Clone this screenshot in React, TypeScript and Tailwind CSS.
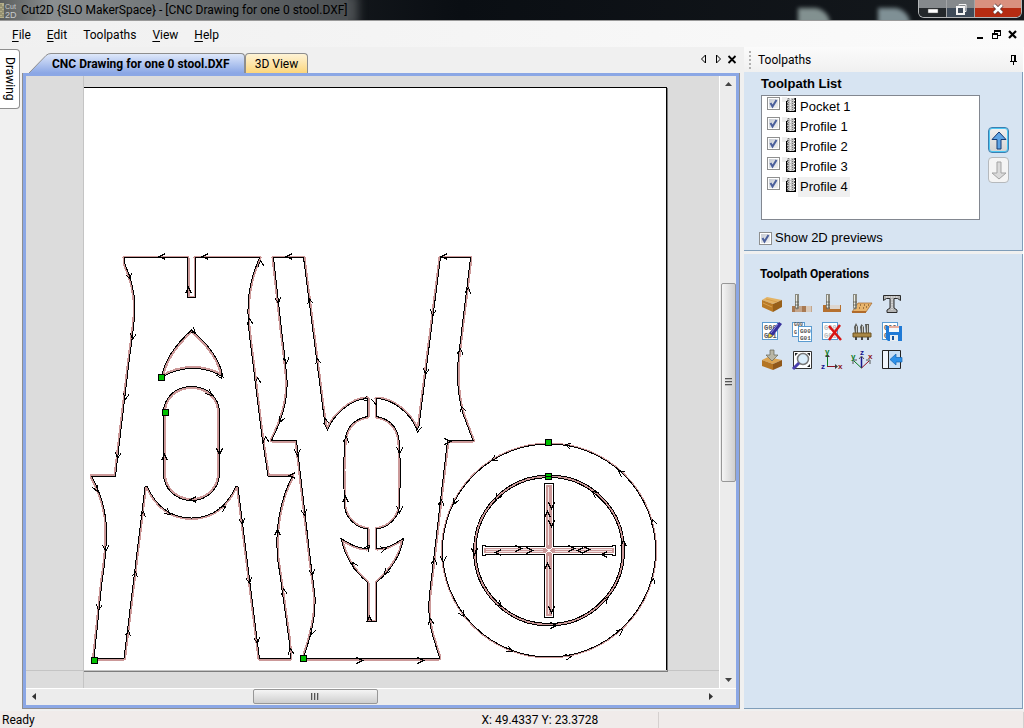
import React, { useState } from 'react'

type ArrowPoint = [x: number, y: number, angle: number]

// Toolpath outlines, in sheet coordinates
const LEG_A =
  'M94 658.5H124L145 487L147 486C156 506 171 518 191.5 518S227 506 236 486L238 487L259.500 658.500H290.500L289 640L280 575C277 560 276 540 278 524S284 492 292.500 476H268L262 437L250 340C247 318 247 300 251 283C253 274 256 266 259.500 257.500H195.500V297.500H187.500V257.500H124.500V263C132 280 135 295 135 308S131 345 129 362L115.500 476H91.500C101 494 106.500 512 106.500 530S104 570 102 582Z'
const LEG_B =
  'M273.500 257.500H303.500L325 425L327.500 430C333 416 350 399 367.500 398.500V416.500C354 419 345 428 344.500 445L343.500 470L344.500 507C346 518 356 528 367.500 529V548.500C358 549 350 544 341 538.500C345 556 352 569 367.500 582.500V621.500H376.500V582.500C391 570 401 555 403.500 538.500C394 544 387 549 376.500 548.500V529C388 528 398 518 399.500 507L400.500 470L399.500 445C399 428 390 419 376.500 416.500V398.500C392 399 410 412 417 430L419 426L440.500 257.500H470.500L466 295L459 352C456 375 457 393 463 414L473 440.500H447.500L434 556L430 590C427 612 430 628 434 640L439 656V658.500H303.500L305 653C312 633 316 615 315 597C314 585 311 566 310 556L296.500 440.500H271.500C283 418 288 400 287 380C286 365 284 350 282 334Z'
const ARROW_HOLE =
  'M161.500 377.500C164 362 175 345 191.500 330C207 343 220 359 223 377C204 365 180 366 161.500 377.500Z'
const OVAL_HOLE =
  'M163.500 413C163.500 397 176 386.500 191.500 386.500S219.500 397 219.500 413V473C219.500 489 207 500.500 191.500 500.500S163.500 489 163.500 473Z'

const ARROWS: ArrowPoint[] = [
  [159, 256, 180], [202, 256, 180], [130, 279, 70], [188, 287, -90], [260, 260, -95],
  [132, 339, 98], [125, 399, 98], [117, 458, 98], [249, 318, -95], [257, 377, -95],
  [265, 436, -95], [195, 333, 45], [221, 378, 60], [211, 395, 45], [219, 454, 90],
  [164, 454, -90], [190, 499, 180], [97, 491, 65], [105, 551, 93], [98, 610, 98],
  [143, 510, -82], [135, 570, -82], [128, 629, -82], [170, 514, 35], [225, 506, -35],
  [242, 524, 82], [249, 583, 82], [257, 643, 82], [290, 648, -95], [283, 588, -97],
  [277, 529, -90], [289, 475, 180], [286, 256, 180], [278, 303, 82], [286, 363, 85],
  [279, 422, 115], [297, 455, 88], [309, 297, -98], [317, 357, -98], [325, 417, -98],
  [361, 399, 170], [375, 404, 80], [441, 256, 180], [432, 315, 98], [425, 374, 98],
  [417, 432, 100], [468, 287, -83], [460, 348, -85], [461, 405, -105], [450, 441, 0],
  [346, 436, -83], [399, 453, 92], [304, 515, 82], [312, 575, 82], [311, 634, 110],
  [345, 496, -90], [399, 512, 92], [369, 545, -50], [386, 548, -10], [352, 562, -125],
  [384, 574, 125], [369, 616, -90], [362, 660, 0], [423, 660, 0], [430, 618, -95],
  [434, 558, -85], [441, 499, -85], [564, 444, 195], [491, 460, 150], [453, 504, 115],
  [443, 562, 88], [463, 616, 60], [512, 651, 25], [571, 656, -8], [622, 629, -40],
  [653, 577, -80], [652, 518, -105], [618, 470, -140], [495, 499, 130], [474, 554, 90],
  [501, 606, 45], [556, 625, 0], [607, 597, -50], [623, 540, -90], [592, 491, -140],
  [521, 548, 0], [532, 550, 0], [495, 552, 180], [574, 548, 0], [577, 550, 180],
  [589, 549, 0], [601, 554, 180], [547, 511, -90], [551, 526, 90], [551, 508, 90],
  [547, 563, -90], [551, 612, 90],
]

const START_POINTS = [
  [161, 377], [165, 412], [94, 660], [303, 658], [548, 442], [548, 476],
]

const Sheet: React.FC = () => (
  <svg viewBox="26 76 693 612" className="block h-[612px] w-[693px] shrink-0" shapeRendering="crispEdges" fill="none">
    <path d="M83.500 76V688M26 670.500H719" stroke="#c4c4c4" />
    <rect x="84" y="87" width="583" height="583" fill="#fff" />
    <path d="M84 87.500H667M666.500 87V670" stroke="#000" />
    <path d="M667.500 88V671M84 671.500H668" stroke="#7c7c7c" />
    <clipPath id="arrow-hole"><path d={ARROW_HOLE} /></clipPath>
    <clipPath id="oval-hole"><path d={OVAL_HOLE} /></clipPath>

    {/* tool offset outside the legs */}
    {[LEG_A, LEG_B].map((d) => (
      <g key={d}>
        <path d={d} stroke="#cc9999" strokeWidth="4" strokeLinejoin="round" />
        <path d={d} fill="#fff" stroke="#000" />
      </g>
    ))}

    {/* tool offset inside the holes */}
    <path d={ARROW_HOLE} stroke="#cc9999" strokeWidth="5" clipPath="url(#arrow-hole)" />
    <path d={ARROW_HOLE} stroke="#000" />
    <path d={OVAL_HOLE} stroke="#cc9999" strokeWidth="5" clipPath="url(#oval-hole)" />
    <path d={OVAL_HOLE} stroke="#000" />

    {/* seat */}
    <circle cx="549" cy="550.500" r="107.500" stroke="#cc9999" />
    <circle cx="549" cy="550.500" r="106.500" stroke="#000" />
    <circle cx="549" cy="550.500" r="74.500" stroke="#cc9999" strokeWidth="2" />
    <circle cx="549" cy="550.500" r="75.500" stroke="#000" />
    <circle cx="549" cy="550.500" r="73" stroke="#000" />
    <path d="M544.500 546.500V483.500H553.500V546.500H612.500V545.500H615.500V555.500H612.500V554.500H553.500V617.500H544.500V554.500H485.500V555.500H482.500V545.500H485.500V546.500Z" fill="#fff" stroke="#000" />
    <path d="M546 485H552V616H546ZM484 548H614V553H484Z" fill="#cc9999" />
    <path d="M548.500 487V545M548.500 556V614M486 549.500H543M555 549.500H612M486 551.500H543M555 551.500H612" stroke="#f2e4e4" />
    <path d="M546 548L552 553M552 548L546 553" stroke="#fff" />

    <g stroke="#000">
      {ARROWS.map(([x, y, angle]) => (
        <path key={`${x}-${y}`} d="M-6 -3L0 0L-6 3" transform={`translate(${x + 0.5} ${y + 0.5}) rotate(${angle})`} />
      ))}
    </g>
    {START_POINTS.map(([x, y]) => (
      <rect key={`${x}-${y}`} x={x - 2.5} y={y - 2.5} width="6" height="6" fill="#00c000" stroke="#000" />
    ))}
    <path d="M546 476.500H551" stroke="#000" />
  </svg>
)

interface CheckProps {
  id: string
  checked: boolean
  onChange: () => void
}

const Check: React.FC<CheckProps> = ({ id, checked, onChange }) => (
  <span className="relative block h-[13px] w-[13px] shrink-0">
    <input
      id={id}
      type="checkbox"
      checked={checked}
      onChange={onChange}
      className="block h-[13px] w-[13px] appearance-none border border-[#8e8f8f] bg-linear-to-br from-[#c3c8d0] to-[#f6f6f6] ring-1 ring-white ring-inset"
    />
    {checked && (
      <svg viewBox="0 0 13 13" className="pointer-events-none absolute inset-0" fill="none">
        <path d="M3.500 6L5.500 9.500L9.500 3" stroke="#4b5f9b" strokeWidth="2" />
      </svg>
    )}
  </span>
)

const EndMill: React.FC = () => (
  <svg viewBox="0 0 14 15" className="h-[15px] w-3.5 shrink-0" shapeRendering="crispEdges">
    <path d="M0 0H5V5H0Z" fill="#efefef" />
    <path d="M5 1H12V14H5Z" fill="#c4c4c4" />
    <path d="M4 4H5V14H4ZM13 1H14V14H13ZM4 14H14V15H4Z" fill="#000" />
    <path d="M6.500 1V14M10.500 2V14" stroke="#777" strokeDasharray="1 1" />
    <path d="M5.500 3V14M12.500 1V14" stroke="#555" strokeDasharray="2 1" />
    <path d="M8.500 1V14" stroke="#efefef" strokeDasharray="2 1" />
  </svg>
)

const GCode = ({ faded = false }: { faded?: boolean }) => (
  <g>
    <rect x="0.500" y="0.500" width="15" height="17" fill="#fff" stroke="#5a9bd0" />
    <g fontFamily="Liberation Mono" fontSize="7" fontWeight="bold" fill={faded ? '#bbb' : '#555'}>
      <text x="2" y="8">G00</text>
      <text x="2" y="16">G01</text>
    </g>
  </g>
)

const Bit = ({ x }: { x: number }) => (
  <g>
    <path d={`M${x} 0h4v13l-2 3l-2-3z`} fill="#8a8a80" />
    <path d={`M${x + 1.5} 1v13`} stroke="#ecece4" />
    <path d={`M${x} 8h4M${x} 11h4M${x} 14h4`} stroke="#55554c" strokeWidth="0.700" />
  </g>
)

const OPERATIONS: { name: string; icon: React.ReactNode }[] = [
  {
    name: 'Material Setup',
    icon: (
      <>
        <path d="M0 6L5 3L20 6L11 10Z" fill="#e3b365" />
        <path d="M0 6L11 10V18L0 13Z" fill="#b97a26" />
        <path d="M11 10L20 6V13L11 18Z" fill="#98601a" />
        <path d="M1 9L10 13M4 5L15 8" stroke="#d8a04c" />
      </>
    ),
  },
  {
    name: 'Profile Toolpath',
    icon: (
      <>
        <path d="M0 12H20V18H0Z" fill="#c4a58b" />
        <path d="M0 12H3V18H0ZM10 12H14V18H10Z" fill="#a87952" />
        <path d="M14 12H19V18H14Z" fill="#d9cabb" />
        <Bit x={3} />
      </>
    ),
  },
  {
    name: 'Pocket Toolpath',
    icon: (
      <>
        <path d="M1 11H19V18H1Z" fill="#b5702f" />
        <path d="M8 11H18V15H8Z" fill="#ddd6d0" />
        <Bit x={4} />
      </>
    ),
  },
  {
    name: 'Drilling Toolpath',
    icon: (
      <>
        <path d="M6 9H20L14 18H0Z" fill="#e8b46c" stroke="#a4642a" strokeWidth="0.700" />
        <path d="M8 11h1M12 11h1M16 11h1M7 14h1M11 14h1M14 13h1" stroke="#5b3714" />
        <path d="M0 17H14V19H0Z" fill="#b06b2b" />
        <Bit x={1} />
      </>
    ),
  },
  {
    name: 'Quick Engrave',
    icon: (
      <>
        <path d="M1.500 1.500H18.500V6.500L15.500 4.500H12V14L15 16V18.500H5V16L8 14V4.500H4.500L1.500 6.500Z" fill="#b4b4b4" stroke="#2c2c2c" />
        <path d="M10 5V16M4 3H16" stroke="#eee" strokeDasharray="1.500 1" />
      </>
    ),
  },
  {
    name: 'Edit Toolpath',
    icon: (
      <>
        <GCode />
        <path d="M17 0L20 2L11 14L7 11Z" fill="#36309c" />
        <path d="M16 2L9 11" stroke="#8e8ae0" />
        <path d="M7 11L11 14L6 16Z" fill="#f0da42" stroke="#333" strokeWidth="0.500" />
      </>
    ),
  },
  {
    name: 'Duplicate Toolpath',
    icon: (
      <>
        <rect x="0.500" y="0.500" width="12" height="14" fill="#fff" stroke="#5a9bd0" />
        <rect x="6.500" y="4.500" width="13" height="15" fill="#fff" stroke="#5a9bd0" />
        <g fontFamily="Liberation Mono" fontWeight="bold" fill="#555" fontSize="5">
          <text x="2" y="4">G00</text>
          <text x="2" y="12">G</text>
        </g>
        <g fontFamily="Liberation Mono" fontWeight="bold" fill="#555" fontSize="6">
          <text x="8" y="11">G00</text>
          <text x="8" y="18">G01</text>
        </g>
      </>
    ),
  },
  {
    name: 'Delete Toolpath',
    icon: (
      <>
        <GCode faded />
        <path d="M7 4L19 18M18 3L7 18" stroke="#d81414" strokeWidth="2.500" />
      </>
    ),
  },
  {
    name: 'Tool Database',
    icon: (
      <>
        <path d="M2 5L4 1L6 5V12H3ZM8 5L9.500 2L12 5V12H9ZM13 2H17V12H14Z" fill="#5c5c58" />
        <path d="M4.500 4V12M10.500 4V12M15.500 3V12" stroke="#c8c8c0" />
        <path d="M1 11H19V15H1Z" fill="#a98745" stroke="#6e5524" />
        <path d="M4 15V18M10 15V18M16 15V18" stroke="#444" strokeWidth="2" />
      </>
    ),
  },
  {
    name: 'Save Toolpath',
    icon: (
      <>
        <GCode />
        <path d="M4 4H20V19H6L4 17Z" fill="#1f7ad6" />
        <path d="M7 4H17V10H7Z" fill="#f4f8fb" />
        <path d="M7 5H17" stroke="#e06640" />
        <path d="M8 13H16V19H8Z" fill="#e9eef2" />
        <path d="M10 14H12V18H10Z" fill="#14539c" />
      </>
    ),
  },
  {
    name: 'Preview Toolpaths',
    icon: (
      <>
        <path d="M0 10L6 7L20 10L11 14Z" fill="#dca552" />
        <path d="M0 10L11 14V20L0 16Z" fill="#b47523" />
        <path d="M11 14L20 10V16L11 20Z" fill="#90581a" />
        <path d="M8 0H12V5H16L10 11L4 5H8Z" fill="#b9b6a5" stroke="#666655" strokeWidth="0.700" />
      </>
    ),
  },
  {
    name: 'Zoom to Fit',
    icon: (
      <>
        <path d="M1.500 1.500H19.500V18.500H1.500Z" fill="#fff" stroke="#333" />
        <path d="M3 3h3l-3 3zM18 3h-3l3 3zM18 17h-3l3-3z" fill="#222" />
        <circle cx="11" cy="9" r="5.500" fill="#dceefb" stroke="#777" strokeWidth="1.500" />
        <path d="M7 13L1 19" stroke="#4a3fae" strokeWidth="3" />
      </>
    ),
  },
  {
    name: 'View down Z axis',
    icon: (
      <>
        <path d="M5.500 6V16" stroke="#0a7a1e" />
        <path d="M5 16.500H15" stroke="#8d1020" />
        <path d="M3 7L5.500 4L8 7ZM13 14L16 16.500L13 19Z" fill="#3c3c3c" />
        <g fontFamily="Liberation Sans" fontSize="8" fontWeight="bold">
          <text x="3" y="4" fill="#0a7a1e">y</text>
          <text x="-1" y="19" fill="#16168c">z</text>
          <text x="16" y="19" fill="#8d1020">x</text>
        </g>
      </>
    ),
  },
  {
    name: 'Isometric View',
    icon: (
      <>
        <path d="M9.500 7V18" stroke="#16168c" strokeWidth="1.500" />
        <path d="M9.500 18L2 11" stroke="#0a7a1e" />
        <path d="M9.500 18L17 11" stroke="#8d1020" />
        <path d="M7 9L9.500 6L12 9M1 14V10H5M18 14V10H14" stroke="#555" fill="none" />
        <g fontFamily="Liberation Sans" fontSize="8" fontWeight="bold">
          <text x="8" y="5" fill="#16168c">z</text>
          <text x="-1" y="9" fill="#0a7a1e">y</text>
          <text x="16" y="9" fill="#8d1020">x</text>
        </g>
      </>
    ),
  },
  {
    name: 'Switch to Drawing Tab',
    icon: (
      <>
        <path d="M0.500 0.500H18.500V18.500H0.500Z" fill="#fff" stroke="#222" />
        <path d="M1 1H6V18H1Z" fill="#f1f6fc" />
        <path d="M7 1H18V18H7Z" fill="#c8dff5" />
        <path d="M6.500 1V18" stroke="#222" />
        <path d="M8 9.500L14 4V7.500H20V12H14V15Z" fill="#2f92ea" stroke="#1364b4" strokeWidth="0.700" />
      </>
    ),
  },
]

const Grip = () => (
  <svg viewBox="0 0 9 7" className="h-[7px] w-[9px]" shapeRendering="crispEdges">
    <path d="M0.500 0V7M3.500 0V7M6.500 0V7" stroke="#555" />
    <path d="M1.500 0V7M4.500 0V7M7.500 0V7" stroke="#bbb" />
  </svg>
)

const MENUS = ['File', 'Edit', 'Toolpaths', 'View', 'Help']

const App: React.FC = () => {
  const [toolpaths, setToolpaths] = useState([
    { name: 'Pocket 1', visible: true },
    { name: 'Profile 1', visible: true },
    { name: 'Profile 2', visible: true },
    { name: 'Profile 3', visible: true },
    { name: 'Profile 4', visible: true },
  ])
  const [previews, setPreviews] = useState(true)

  const toggle = (index: number) =>
    setToolpaths(toolpaths.map((t, i) => (i === index ? { ...t, visible: !t.visible } : t)))

  return (
    <div className="flex h-screen flex-col overflow-hidden bg-[#f0f0f0] font-[Roboto,sans-serif] text-xs text-black">
      {/* Title bar */}
      <header className="flex h-[21px] shrink-0 items-start justify-between overflow-hidden border-b border-[#9a9a9a] bg-linear-to-r from-[#2e3133] via-[#0a0e13] via-45% to-[#15191d]">
        <div className="flex h-5 items-center bg-linear-to-r from-[#5b5e5d] via-[#8a8e90] via-15% to-[#4b4f52] shadow-[4px_0_10px_6px_#4b4f52]">
          <svg viewBox="0 0 17 20" className="h-5 w-[17px]">
            <path d="M0 3H4V18H0Z" fill="#b6b08a" />
            <path d="M1 4V17M3 6V18" stroke="#77745b" strokeDasharray="3 1" />
            <g fill="#c8cacb" fontFamily="Liberation Sans">
              <text x="5" y="9" fontSize="7">Cut</text>
              <text x="5" y="18" fontSize="9">2D</text>
            </g>
          </svg>
          <h1 className="pl-1 leading-5 whitespace-nowrap">Cut2D {'{SLO MakerSpace}'} - [CNC Drawing for one 0 stool.DXF]</h1>
        </div>
        <div className="flex items-start">
          <div className="mt-2 mr-12 h-4 w-8 rounded-tr-full bg-[#9fb0ae] opacity-80 blur-[2px]" />
          <div className="mt-2 mr-2 h-4 w-8 rounded-tr-full bg-[#9bafb4] opacity-80 blur-[2px]" />
          <div className="mr-0.5 flex h-[18px] overflow-hidden rounded-b-md border border-t-0 border-[#b4b6b8]">
            <button aria-label="Minimize" className="flex w-7 items-center justify-center border-r border-[#a2a4a6] bg-linear-to-b from-[#85898c] from-50% to-[#24282b] to-50%">
              <svg viewBox="0 0 12 12" className="h-3 w-3"><path d="M1 6H11V10H1Z" fill="#fff" stroke="#555" strokeWidth="0.500" /></svg>
            </button>
            <button aria-label="Restore" className="flex w-7 items-center justify-center border-r border-[#a2a4a6] bg-linear-to-b from-[#85898c] from-50% to-[#3f4b59] to-50%">
              <svg viewBox="0 0 12 12" className="h-3 w-3" fill="none" stroke="#f4f4f4">
                <path d="M4 2.500V1.500H11V8.500H10" />
                <path d="M2 4H9V11H2Z" strokeWidth="2" />
              </svg>
            </button>
            <button aria-label="Close" className="flex w-[46px] items-center justify-center bg-linear-to-b from-[#d9917f] from-50% to-[#b52c12] to-50%">
              <svg viewBox="0 0 12 12" className="h-3 w-3" fill="none">
                <path d="M2 2L10 10M10 2L2 10" stroke="#5b3a38" strokeWidth="4" />
                <path d="M2 2L10 10M10 2L2 10" stroke="#fff" strokeWidth="2.500" />
              </svg>
            </button>
          </div>
        </div>
      </header>

      {/* Menu bar */}
      <nav className="flex h-[26px] shrink-0 items-center justify-between bg-linear-to-r from-[#f0f0f0] to-[#fbfbfb] pt-0.5 pr-1.5 pl-3">
        <ul className="flex gap-4">
          {MENUS.map((menu) => (
            <li key={menu}>
              <button>
                {menu === 'Toolpaths' ? menu : <><span className="underline underline-offset-2">{menu[0]}</span>{menu.slice(1)}</>}
              </button>
            </li>
          ))}
        </ul>
        <div className="flex gap-1 pb-0.5">
          <button aria-label="Minimize document">
            <svg viewBox="0 0 12 12" className="h-3 w-3"><path d="M3 9H9V11H3Z" /></svg>
          </button>
          <button aria-label="Restore document">
            <svg viewBox="0 0 12 12" className="h-3 w-3" fill="none" stroke="#000" shapeRendering="crispEdges">
              <path d="M4.500 5V2.500H10.500V7.500H8M4 3.500H11M2 6.500H8" />
              <path d="M2.500 5.500H7.500V10.500H2.500Z" />
            </svg>
          </button>
          <button aria-label="Close document">
            <svg viewBox="0 0 12 12" className="h-3 w-3"><path d="M3 3L10 10M10 3L3 10" stroke="#000" strokeWidth="2.200" /></svg>
          </button>
        </div>
      </nav>

      <div className="flex min-h-0 flex-1">
        {/* Collapsed drawing pane */}
        <aside className="w-[22px] shrink-0 pt-0.5">
          <button className="flex h-[60px] w-5 items-center justify-center rounded-r-sm border border-l-0 border-[#8e8e8e] bg-white [writing-mode:vertical-rl]">
            Drawing
          </button>
        </aside>

        <main className="flex min-w-0 flex-1 flex-col">
          <div className="flex h-[26px] shrink-0 items-end justify-between pr-0.5 pl-[7px]">
            <div role="tablist" className="flex h-5 items-stretch">
              <svg viewBox="0 0 22 20" className="h-5 w-[22px]">
                <defs>
                  <linearGradient id="tab" x1="0" y1="0" x2="0" y2="1">
                    <stop offset="0" stopColor="#dfe8fa" />
                    <stop offset="1" stopColor="#8ba7e5" />
                  </linearGradient>
                </defs>
                <path d="M0 20L17 2.500Q19 0.500 22 0.500V20Z" fill="url(#tab)" />
                <path d="M0 20L17 2.500Q19 0.500 22 0.500" fill="none" stroke="#8e8e8e" />
              </svg>
              <button role="tab" aria-selected="true" className="w-[194px] rounded-tr-sm border-t border-r border-[#8e8e8e] bg-linear-to-b from-[#dfe8fa] to-[#8ba7e5] pr-2 pl-px text-left font-bold whitespace-nowrap">
                CNC Drawing for one 0 stool.DXF
              </button>
              <button role="tab" aria-selected="false" className="w-[63px] rounded-t-sm border border-b-0 border-[#8e8e8e] bg-linear-to-b from-[#fef3d6] to-[#fcd67a]">
                3D View
              </button>
            </div>
            <div className="flex gap-0.5 pb-2">
              <button aria-label="Scroll tabs left">
                <svg viewBox="0 0 12 12" className="h-3 w-3" fill="none" stroke="#000"><path d="M7.500 2L3.500 6L7.500 10Z" /></svg>
              </button>
              <button aria-label="Scroll tabs right">
                <svg viewBox="0 0 12 12" className="h-3 w-3" fill="none" stroke="#000"><path d="M4.500 2L8.500 6L4.500 10Z" /></svg>
              </button>
              <button aria-label="Close tab">
                <svg viewBox="0 0 12 12" className="h-3 w-3"><path d="M2.500 3L9.500 10M9.500 3L2.500 10" stroke="#000" strokeWidth="1.800" /></svg>
              </button>
            </div>
          </div>

          <div className="flex min-h-0 flex-1 border-r border-b border-l border-[#8e8e8e]">
            <div className="flex min-w-0 flex-1 flex-col border-3 border-[#8ba7e5]">
              <div className="flex min-h-0 flex-1">
                <div className="min-w-0 flex-1 overflow-hidden bg-[#dcdcdc]">
                  <Sheet />
                </div>
                <div className="flex w-[17px] shrink-0 flex-col items-center border-l border-white bg-[#ececec]">
                  <svg viewBox="0 0 7 17" className="h-[17px] w-[7px]"><path d="M0 10L3.500 6L7 10Z" fill="#444" /></svg>
                  <div className="w-full flex-1" />
                  <div className="flex h-[199px] w-[15px] items-center justify-center rounded-xs border border-[#979797] bg-linear-to-r from-[#f5f5f5] to-[#cfcfcf]">
                    <span className="rotate-90"><Grip /></span>
                  </div>
                  <div className="w-full flex-1" />
                  <svg viewBox="0 0 7 17" className="h-[17px] w-[7px]"><path d="M0 7L3.500 11L7 7Z" fill="#444" /></svg>
                </div>
              </div>
              <div className="flex h-[17px] shrink-0 items-center border-t border-white bg-[#ececec] pr-[17px] pb-px">
                <svg viewBox="0 0 17 7" className="h-[7px] w-[17px]"><path d="M10 0L6 3.500L10 7Z" fill="#333" /></svg>
                <div className="flex-[39]" />
                <div className="flex h-[15px] w-[125px] items-center justify-center rounded-xs border border-[#979797] bg-linear-to-b from-[#f5f5f5] to-[#cfcfcf]">
                  <Grip />
                </div>
                <div className="flex-[60]" />
                <svg viewBox="0 0 17 7" className="h-[7px] w-[17px]"><path d="M7 0L11 3.500L7 7Z" fill="#333" /></svg>
              </div>
            </div>
          </div>
        </main>

        {/* Toolpaths pane */}
        <aside className="ml-1 flex w-[280px] shrink-0 flex-col border-r border-white font-['Liberation_Sans',sans-serif]">
          <div className="flex h-[25px] shrink-0 items-center justify-between bg-linear-to-b from-[#fbfbfb] to-[#f0f0f0] pr-1">
            <div className="flex items-center gap-1.5 pl-[5px]">
              <span className="h-[18px] w-[3px] border-l-2 border-dotted border-[#b0b0b0]" />
              <h2 className="font-[Roboto,sans-serif]">Toolpaths</h2>
            </div>
            <button aria-label="Auto hide">
              <svg viewBox="0 0 12 12" className="h-3 w-3" fill="none" stroke="#000" shapeRendering="crispEdges">
                <path d="M4.500 7V1.500H7.500V7M8.500 1V7M3 7.500H10M6.500 8V11" />
              </svg>
            </button>
          </div>

          <section className="h-[179px] shrink-0 border-r border-b border-[#7f9db9] bg-[#d7e4f2] pr-3 pl-4">
            <h3 className="h-[23px] pl-px text-[13px] leading-6 font-bold">Toolpath List</h3>
            <div className="flex items-start justify-between">
              <ul className="ml-px h-[125px] w-[219px] border border-[#828790] bg-white pt-px pl-[5px]">
                {toolpaths.map((toolpath, index) => (
                  <li key={toolpath.name} className="flex h-5 items-start">
                    <Check id={`toolpath-${index}`} checked={toolpath.visible} onChange={() => toggle(index)} />
                    <span className="pl-0.5"><EndMill /></span>
                    <label
                      htmlFor={`toolpath-${index}`}
                      className={index === 4 ? 'ml-0.5 bg-[#f0f0f0] px-0.5 text-[13px] leading-5' : 'ml-0.5 px-0.5 text-[13px] leading-5'}
                    >
                      {toolpath.name}
                    </label>
                  </li>
                ))}
              </ul>
              <div className="flex flex-col gap-1 pt-8 pr-px">
                <button aria-label="Move up" className="flex h-[26px] w-[21px] items-center justify-center rounded-sm border border-[#3c7fb1] bg-linear-to-b from-[#f0f0f0] to-[#d4d4d4] ring-1 ring-[#4dc7f2] ring-inset">
                  <svg viewBox="0 0 16 19" className="h-[19px] w-4"><path d="M8 1L15 8.500H10V18H6V8.500H1Z" fill="#5fa4e4" stroke="#153a72" /></svg>
                </button>
                <button aria-label="Move down" disabled className="flex h-[26px] w-[21px] items-center justify-center rounded-sm border border-[#b5b9bd] bg-[#f4f4f4]">
                  <svg viewBox="0 0 16 19" className="h-[19px] w-4"><path d="M8 18L1 12H6V1H10V12H15Z" fill="#dadada" stroke="#a3a3a3" /></svg>
                </button>
              </div>
            </div>
            <div className="-ml-px flex h-9 items-center gap-[3px]">
              <Check id="previews" checked={previews} onChange={() => setPreviews(!previews)} />
              <label htmlFor="previews" className="text-[13px]">Show 2D previews</label>
            </div>
          </section>

          <section className="mt-[3px] flex-1 border-r border-b border-[#7f9db9] bg-[#d7e4f2] px-4 pt-2.5">
            <h3 className="h-[30px] font-[Roboto,sans-serif] leading-5 font-bold">Toolpath Operations</h3>
            <div className="grid grid-cols-[repeat(5,20px)] gap-x-2.5 gap-y-2 pl-0.5">
              {OPERATIONS.map((operation) => (
                <button key={operation.name} aria-label={operation.name} className="h-5 w-5">
                  <svg viewBox="0 0 20 20" className="h-5 w-5 overflow-visible">{operation.icon}</svg>
                </button>
              ))}
            </div>
          </section>
        </aside>
      </div>

      <footer className="mt-0.5 flex h-[17px] shrink-0 items-center bg-[#f0ebea] pl-0.5 leading-4">
        <span className="flex-[480]">Ready</span>
        <span className="flex-[177] border-r border-[#d5d0cf]">X: 49.4337 Y: 23.3728</span>
        <span className="h-4 flex-[364] border-r border-[#d5d0cf]" />
      </footer>
    </div>
  )
}

export default App
